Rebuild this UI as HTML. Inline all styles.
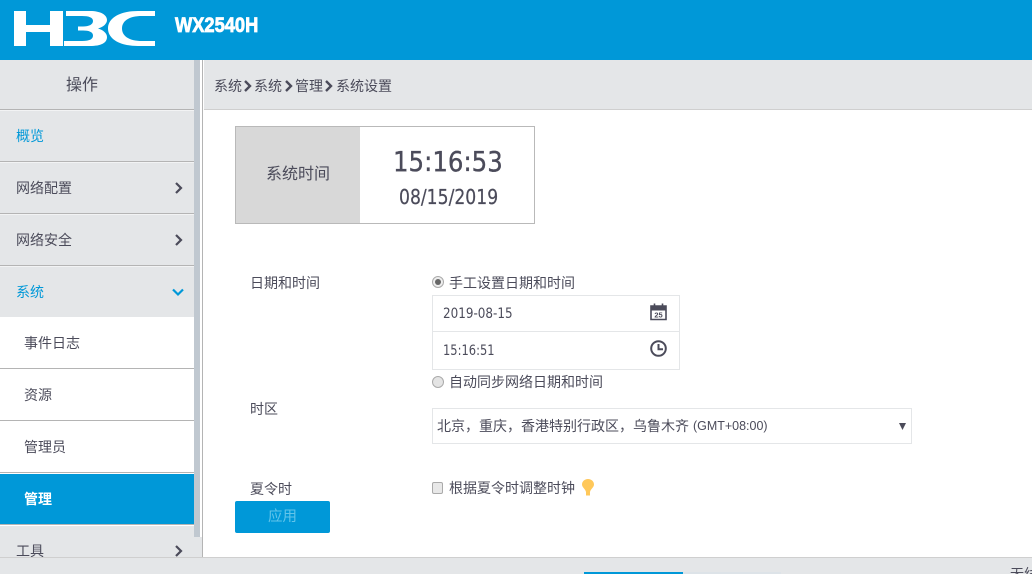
<!DOCTYPE html>
<html lang="zh"><head><meta charset="utf-8"><title>H3C</title>
<style>
html,body{margin:0;padding:0;background:#fff;overflow:hidden}
body{width:1032px;height:574px;position:relative;font-family:"DejaVu Sans","Noto Sans CJK SC",sans-serif;font-size:13px;color:#4b4b5a}
.a{position:absolute;white-space:nowrap}
.z{font-family:"Liberation Sans","Noto Sans CJK SC",sans-serif;font-size:14px;line-height:18px}
.n{transform-origin:left center}
.r{position:absolute;left:0;width:194px;background:#e4e6e8}
.w{background:#fff}
.l{position:absolute;left:0;width:194px;height:1px;background:#b4b4b4}
svg{position:absolute;overflow:visible}
</style></head><body>
<div class="a" style="left:0;top:0;width:1032px;height:60px;background:#0098d8"></div>
<svg style="left:0;top:0" width="170" height="60" fill="#fff"><path d="M14 11H26V25H50V11H63V46H50V32H26V46H14Z"/><path d="M66 11H90C101 11 107 15 107 20C107 24 103 27 98 28.5C103 30 107 33 107 37C107 43 101 46 90 46H64V41H82C90 41 93 39 93 35.500C93 32 89 30.500 83 30.500H78V26.500H83C89 26.500 93 24.500 93 21C93 17.500 89 16 82 16H66Z"/><path d="M155 11H138C120 11 108 18 108 28.500C108 39 120 46 138 46H155V41H142C129 41 122 36 122 28.500C122 21 129 16 142 16H155Z"/></svg>
<div class="a n" style="left:175px;top:14px;color:#fff;font:bold 21px/24px 'Liberation Sans',sans-serif;-webkit-text-stroke:.8px #fff;transform:scaleX(.87)">WX2540H</div>

<div class="r" style="top:60px;height:49px"></div>
<div class="r" style="top:110px;height:51px"></div>
<div class="r" style="top:162px;height:51px"></div>
<div class="r" style="top:214px;height:51px"></div>
<div class="r" style="top:266px;height:51px"></div>
<div class="r w" style="top:317px;height:157px"></div>
<div class="r" style="top:474px;height:50px;background:#0098d8"></div>
<div class="r" style="top:526px;height:31px"></div>
<div class="r w" style="top:110px;height:1px;background:#f2f3f4"></div>
<div class="r w" style="top:162px;height:1px;background:#f2f3f4"></div>
<div class="r w" style="top:214px;height:1px;background:#f2f3f4"></div>
<div class="r w" style="top:266px;height:1px;background:#f2f3f4"></div>
<div class="l" style="top:109px"></div>
<div class="l" style="top:161px"></div>
<div class="l" style="top:213px"></div>
<div class="l" style="top:265px"></div>
<div class="l" style="top:368px"></div>
<div class="l" style="top:420px"></div>
<div class="l" style="top:472px"></div>
<div class="l" style="top:524px"></div>
<div class="a" style="left:194px;top:60px;width:6px;height:477px;background:#c0c8d0"></div>
<div class="a" style="left:194px;top:537px;width:8px;height:20px;background:#e4e6e8"></div>
<div class="a" style="left:202px;top:60px;width:1px;height:497px;background:#b4b4b4"></div>

<div class="a z" style="left:66px;top:77px;font-size:16px">操作</div>
<div class="a z" style="left:16px;top:127px;color:#0098d8">概览</div>
<div class="a z" style="left:16px;top:179px">网络配置</div>
<div class="a z" style="left:16px;top:231px">网络安全</div>
<div class="a z" style="left:16px;top:283px;color:#0098d8">系统</div>
<div class="a z" style="left:24px;top:334px">事件日志</div>
<div class="a z" style="left:24px;top:386px">资源</div>
<div class="a z" style="left:24px;top:438px">管理员</div>
<div class="a z" style="left:24px;top:490px;color:#fff;font-weight:bold">管理</div>
<div class="a z" style="left:16px;top:542px">工具</div>
<svg style="left:0;top:0" width="194" height="557" fill="none" stroke="#4b4b5a" stroke-width="2.200"><path d="M176 183L181 188L176 193"/><path d="M176 235L181 240L176 245"/><path d="M173 289.500L178 294.500L183 289.500" stroke="#0098d8"/><path d="M176 546L181 551L176 556"/></svg>

<div class="a" style="left:204px;top:60px;width:828px;height:49px;background:#e4e6e8"></div>
<div class="a" style="left:204px;top:109px;width:828px;height:1px;background:#cfcfcf"></div>
<div class="a z" style="left:214px;top:77px">系统</div>
<div class="a z" style="left:254px;top:77px">系统</div>
<div class="a z" style="left:295px;top:77px">管理</div>
<div class="a z" style="left:336px;top:77px">系统设置</div>
<svg style="left:0;top:0" width="340" height="100" fill="none" stroke="#4b4b5a" stroke-width="2.400"><path d="M245 81L250 86L245 91"/><path d="M286 81L291 86L286 91"/><path d="M326 81L331 86L326 91"/></svg>

<div class="a" style="left:235px;top:126px;width:298px;height:96px;border:1px solid #b9b9b9;background:#fff"></div>
<div class="a" style="left:236px;top:127px;width:124px;height:96px;background:#d8d8d8"></div>
<div class="a z" style="left:266px;top:165px;font-size:16px;line-height:20px">系统时间</div>
<div class="a n" style="left:393px;top:145px;font-size:28px;line-height:34px;-webkit-text-stroke:.35px #4b4b5a;transform:scaleX(.873)">15:16:53</div>
<div class="a n" style="left:399px;top:184px;font-size:20px;line-height:26px;-webkit-text-stroke:.2px #4b4b5a;transform:scaleX(.86)">08/15/2019</div>

<div class="a z" style="left:250px;top:274px">日期和时间</div>
<div class="a z" style="left:250px;top:400px">时区</div>
<div class="a z" style="left:250px;top:480px">夏令时</div>

<svg style="left:432px;top:276px" width="12" height="12"><circle cx="6" cy="6" r="5.500" fill="#eee" stroke="#aaa"/><circle cx="6" cy="6" r="3" fill="#666"/></svg>
<div class="a z" style="left:449px;top:274px">手工设置日期和时间</div>
<div class="a" style="left:432px;top:295px;width:246px;height:73px;border:1px solid #e4e6e8"></div>
<div class="a" style="left:433px;top:331px;width:246px;height:1px;background:#e4e6e8"></div>
<div class="a n" style="left:443px;top:305px;font-size:14px;line-height:18px;transform:scaleX(.855)">2019-08-15</div>
<div class="a n" style="left:443px;top:342px;font-size:14px;line-height:18px;transform:scaleX(.82)">15:16:51</div>
<svg style="left:650px;top:303px" width="17" height="17" fill="none" stroke="#4b4b5a"><path d="M1 3H16V16.500H1Z" stroke-width="1.600"/><path d="M1 4H16V7H1Z" fill="#4b4b5a"/><path d="M4.500 0.500V5M12.500 0.500V5" stroke-width="1.600"/><text x="8.500" y="14.500" text-anchor="middle" stroke="none" fill="#4b4b5a" font-family="Liberation Sans" font-weight="bold" font-size="7.500">25</text></svg>
<svg style="left:650px;top:340px" width="17" height="17" fill="none" stroke="#4b4b5a" stroke-width="2"><circle cx="8.500" cy="8.500" r="7.300"/><path d="M8.500 4V9.300H13"/></svg>
<svg style="left:432px;top:376px" width="12" height="12"><circle cx="6" cy="6" r="5.500" fill="#e4e4e4" stroke="#aaa"/></svg>
<div class="a z" style="left:449px;top:373px">自动同步网络日期和时间</div>

<div class="a" style="left:432px;top:408px;width:478px;height:34px;border:1px solid #e4e6e8"></div>
<div class="a z" style="left:437px;top:417px">北京，重庆，香港特别行政区，乌鲁木齐</div>
<div class="a n" style="left:693px;top:417px;font:13px/18px 'Liberation Sans',sans-serif;transform:scaleX(.96)">(GMT+08:00)</div>
<svg style="left:899px;top:423px" width="7" height="7"><path d="M0 0H7L3.500 7Z" fill="#4b4b5a"/></svg>

<div class="a" style="left:432px;top:482px;width:9px;height:10px;border:1px solid #aaa;border-radius:2px;background:#e8e8e8"></div>
<div class="a z" style="left:449px;top:479px">根据夏令时调整时钟</div>
<svg style="left:581px;top:479px" width="14" height="18" fill="#ffc85a"><path d="M7 0C10.500 0 13 2.500 13 5.500C13 8.500 9.500 10 9 13V16.500H5V13C4.500 10 1 8.500 1 5.500C1 2.500 3.500 0 7 0Z"/></svg>

<div class="a" style="left:235px;top:501px;width:95px;height:32px;background:#0098d8;border-radius:2px"></div>
<div class="a z" style="left:268px;top:508px;font-size:14.500px;color:#62c4ea">应用</div>

<div class="a" style="left:0;top:557px;width:1032px;height:17px;background:#e4e6e8;border-top:1px solid #cfcfcf;box-sizing:border-box"></div>
<div class="a" style="left:584px;top:572px;width:99px;height:2px;background:#0098d8"></div>
<div class="a" style="left:683px;top:572px;width:98px;height:2px;background:#dde3e8"></div>
<div class="a z" style="left:1010px;top:565px;height:9px;overflow:hidden">无线</div>
</body></html>
